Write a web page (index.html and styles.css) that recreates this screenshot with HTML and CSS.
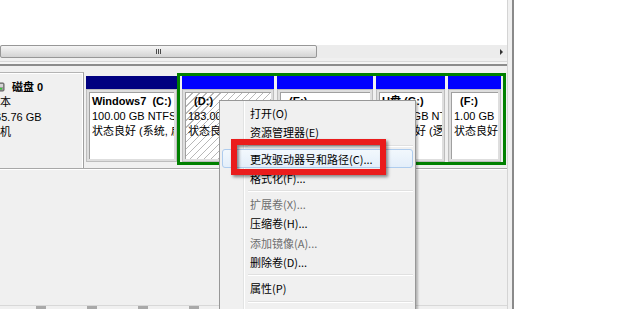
FILE: index.html
```html
<!DOCTYPE html>
<html lang="zh-CN">
<head>
  <meta charset="UTF-8" />
  <title>磁盘管理</title>
  <link rel="stylesheet" href="styles.css">
</head>
<body>
  <div class="screen">
    <div class="window">
      <div class="panes">
        <div class="list-pane"></div>
        <div class="hscroll">
          <div class="thumb"><span class="grip"></span></div>
          <div class="track"></div>
          <div class="arrow-btn"><span class="arrow"></span></div>
        </div>
        <div class="splitter"></div>
        <div class="graph-pane">
          <div class="disk-row">
            <div class="disk-label">
              <div class="disk-title">
                <svg class="disk-icon" width="16" height="16" viewBox="0 0 16 16">
                  <rect x="1" y="4" width="14" height="8" rx="1" fill="#9a9a9a" stroke="#5f5f5f"/>
                  <rect x="2" y="5" width="12" height="3" fill="#d4d4d4"/>
                  <rect x="11" y="9" width="2" height="1.5" fill="#3c3"/>
                </svg>
                <b>磁盘 0</b>
              </div>
              <div>基本</div>
              <div>465.76 GB</div>
              <div>联机</div>
            </div>
            <div class="disk-map">
              <div class="part part-c">
                <div class="bar bar-primary"></div>
                <div class="pbody">
                  <div class="pin">
                    <b>Windows7&nbsp;&nbsp;(C:)</b>
                    <div>100.00 GB NTFS</div>
                    <div>状态良好 (系统, 启动, 页面文件, 活动, 故障转储, 主分区)</div>
                  </div>
                </div>
              </div>
              <div class="ext">
                <div class="part part-d">
                  <div class="bar"></div>
                  <div class="pbody">
                    <div class="pin hatched">
                      <b>&nbsp;&nbsp;(D:)</b>
                      <div>183.00 GB NTFS</div>
                      <div>状态良好 (逻辑驱动器)</div>
                    </div>
                  </div>
                </div>
                <div class="part part-e">
                  <div class="bar"></div>
                  <div class="pbody">
                    <div class="pin">
                      <b>&nbsp;&nbsp;(E:)</b>
                      <div>167.11 GB NTFS</div>
                      <div>状态良好 (逻辑驱动器)</div>
                    </div>
                  </div>
                </div>
                <div class="part part-g">
                  <div class="bar"></div>
                  <div class="pbody">
                    <div class="pin">
                      <b>U盘 (G:)</b>
                      <div>14.65 GB NTFS</div>
                      <div>状态良好 (逻辑驱动器)</div>
                    </div>
                  </div>
                </div>
                <div class="part part-f">
                  <div class="bar"></div>
                  <div class="pbody">
                    <div class="pin">
                      <b>&nbsp;&nbsp;(F:)</b>
                      <div>1.00 GB</div>
                      <div>状态良好</div>
                    </div>
                  </div>
                </div>
              </div>
            </div>
          </div>
          <div class="legend">
            <span class="swatch"></span>
            <span class="swatch"></span>
            <span class="swatch"></span>
            <span class="swatch"></span>
          </div>
        </div>
      </div>

      <!-- context menu of the selected volume -->
      <div class="menu">
        <div class="item">打开(O)</div>
        <div class="item">资源管理器(E)</div>
        <div class="sep"></div>
        <div class="item hover">更改驱动器号和路径(C)...</div>
        <div class="item">格式化(F)...</div>
        <div class="sep"></div>
        <div class="item disabled">扩展卷(X)...</div>
        <div class="item">压缩卷(H)...</div>
        <div class="item disabled">添加镜像(A)...</div>
        <div class="item">删除卷(D)...</div>
        <div class="sep"></div>
        <div class="item">属性(P)</div>
        <div class="sep"></div>
        <div class="item">帮助(H)</div>
      </div>
      <div class="callout"></div>
    </div>
    <div class="desktop"></div>
  </div>
</body>
</html>
```

FILE: styles.css
```css
html, body { margin: 0; padding: 0; }
body {
  width: 620px;
  height: 309px;
  overflow: hidden;
  background: #fff;
  font-family: "Liberation Sans", "Noto Sans CJK SC", sans-serif;
  font-size: 11px;
  color: #000;
}
.screen {
  display: flex;
  height: 309px;
}
.window {
  position: relative;
  display: flex;
  width: 512px;
  height: 309px;
  overflow: hidden;
  background: #f0f0f0;
  border-right: 2px solid #8a8a8a;
}
.panes {
  display: flex;
  flex-direction: column;
  width: 507px;
  border-right: 1px solid #d4d4d4;
}
.desktop { flex: 1; background: #fff; }

.list-pane {
  height: 45px;
  background: #fff;
}
.hscroll {
  display: flex;
  height: 13px;
  background: #ececec;
}
.thumb {
  display: flex;
  align-items: center;
  justify-content: center;
  box-sizing: border-box;
  width: 317px;
  border: 1px solid #979797;
  border-radius: 2px;
  background: linear-gradient(#f5f5f5, #e6e6e6 45%, #d3d3d3);
}
.grip {
  width: 5px;
  height: 5px;
  background: repeating-linear-gradient(to right, #4a4a4a 0 1px, transparent 1px 2px);
}
.track { flex: 1; }
.arrow-btn {
  display: flex;
  align-items: center;
  justify-content: center;
  width: 12px;
}
.arrow {
  width: 0;
  height: 0;
  border-left: 3px solid #333;
  border-top: 3px solid transparent;
  border-bottom: 3px solid transparent;
}
.splitter {
  height: 8px;
  background: linear-gradient(#f0f0f0 0 3px, #d9d9d9 3px 4px, #f5f5f5 4px 6px, #8c8c8c 6px);
}

.graph-pane {
  flex: 1;
  display: flex;
  flex-direction: column;
}
.disk-row {
  display: flex;
  margin-top: 6px;
  height: 96px;
  border-bottom: 1px solid #a8a8a8;
  box-shadow: 0 1px 0 #fff;
}
.disk-label {
  box-sizing: border-box;
  width: 96px;
  margin-left: -12px;
  padding: 6px 0 0 1px;
  border-top: 1px solid #b4b4b4;
  border-right: 1px solid #a0a0a0;
  box-shadow: inset -1px 1px 0 #fff;
  line-height: 15px;
  white-space: nowrap;
}
.disk-title {
  display: flex;
  align-items: center;
  gap: 7px;
}
.disk-icon { display: block; }
.disk-map {
  display: flex;
  align-items: flex-start;
  padding: 1px 0 0 2px;
}
.part {
  display: flex;
  flex-direction: column;
  height: 86px;
}
.part-c { width: 91px; margin-top: 3px; }
.bar {
  height: 13px;
  background: #0000ff;
}
.bar-primary { background: #000080; }
.pbody {
  flex: 1;
  display: flex;
  box-sizing: border-box;
  border: 1px solid #bdbdbd;
  padding: 2px;
  background: #dedede;
  overflow: hidden;
}
.pin {
  flex: 1;
  min-width: 0;
  box-sizing: border-box;
  background: #fff;
  border-top: 1px solid #a0a0a0;
  border-left: 1px solid #a0a0a0;
  padding: 1px 0 0 2px;
  line-height: 15px;
  white-space: nowrap;
  overflow: hidden;
}
.pin b { display: block; }
.hatched {
  background: repeating-linear-gradient(135deg, #fff 0 4px, #b8b8b8 4px 5px);
}
.ext {
  display: flex;
  gap: 3px;
  width: 329px;
  box-sizing: border-box;
  border: 3px solid #008000;
  padding: 0 2px;
}
.part-d { width: 92px; }
.part-e { width: 96px; }
.part-g { width: 69px; }
.part-f { width: 53px; }

.legend {
  display: flex;
  gap: 41px;
  margin-top: auto;
  height: 3px;
  padding-left: 36px;
  border-top: 1px solid #d8d8d8;
}
.swatch {
  width: 10px;
  height: 3px;
  background: #a9a9a9;
}

.menu {
  position: absolute;
  left: 219px;
  top: 100px;
  box-sizing: border-box;
  width: 197px;
  padding: 2px;
  border: 1px solid #979797;
  background: linear-gradient(to right, transparent 23px, #e2e3e3 23px 24px, #fff 24px 25px, transparent 25px), #f0f0f0;
  box-shadow: 2px 2px 2px rgba(0, 0, 0, 0.25);
  font-family: "Noto Sans CJK SC", sans-serif;
  font-size: 11px;
}
.item {
  height: 19.3px;
  line-height: 19px;
  box-sizing: border-box;
  border: 1px solid transparent;
  border-radius: 3px;
  padding-left: 27px;
  white-space: nowrap;
}
.item.hover {
  border-color: #aeccee;
  background: linear-gradient(#f2f8fd, #e3eefa);
}
.item.disabled { color: #6d6d6d; }
.sep {
  height: 7px;
  margin-left: 26px;
  background:
    linear-gradient(#e0e0e0, #e0e0e0) 0 3px / 100% 1px no-repeat,
    linear-gradient(#fff, #fff) 0 4px / 100% 1px no-repeat;
}

.callout {
  position: absolute;
  left: 231px;
  top: 139px;
  width: 155px;
  height: 36px;
  box-sizing: border-box;
  border: 6px solid #ea1c1c;
  box-shadow: 2px 2px 3px rgba(0, 0, 0, 0.45), inset 2px 2px 3px rgba(0, 0, 0, 0.45);
}
```
